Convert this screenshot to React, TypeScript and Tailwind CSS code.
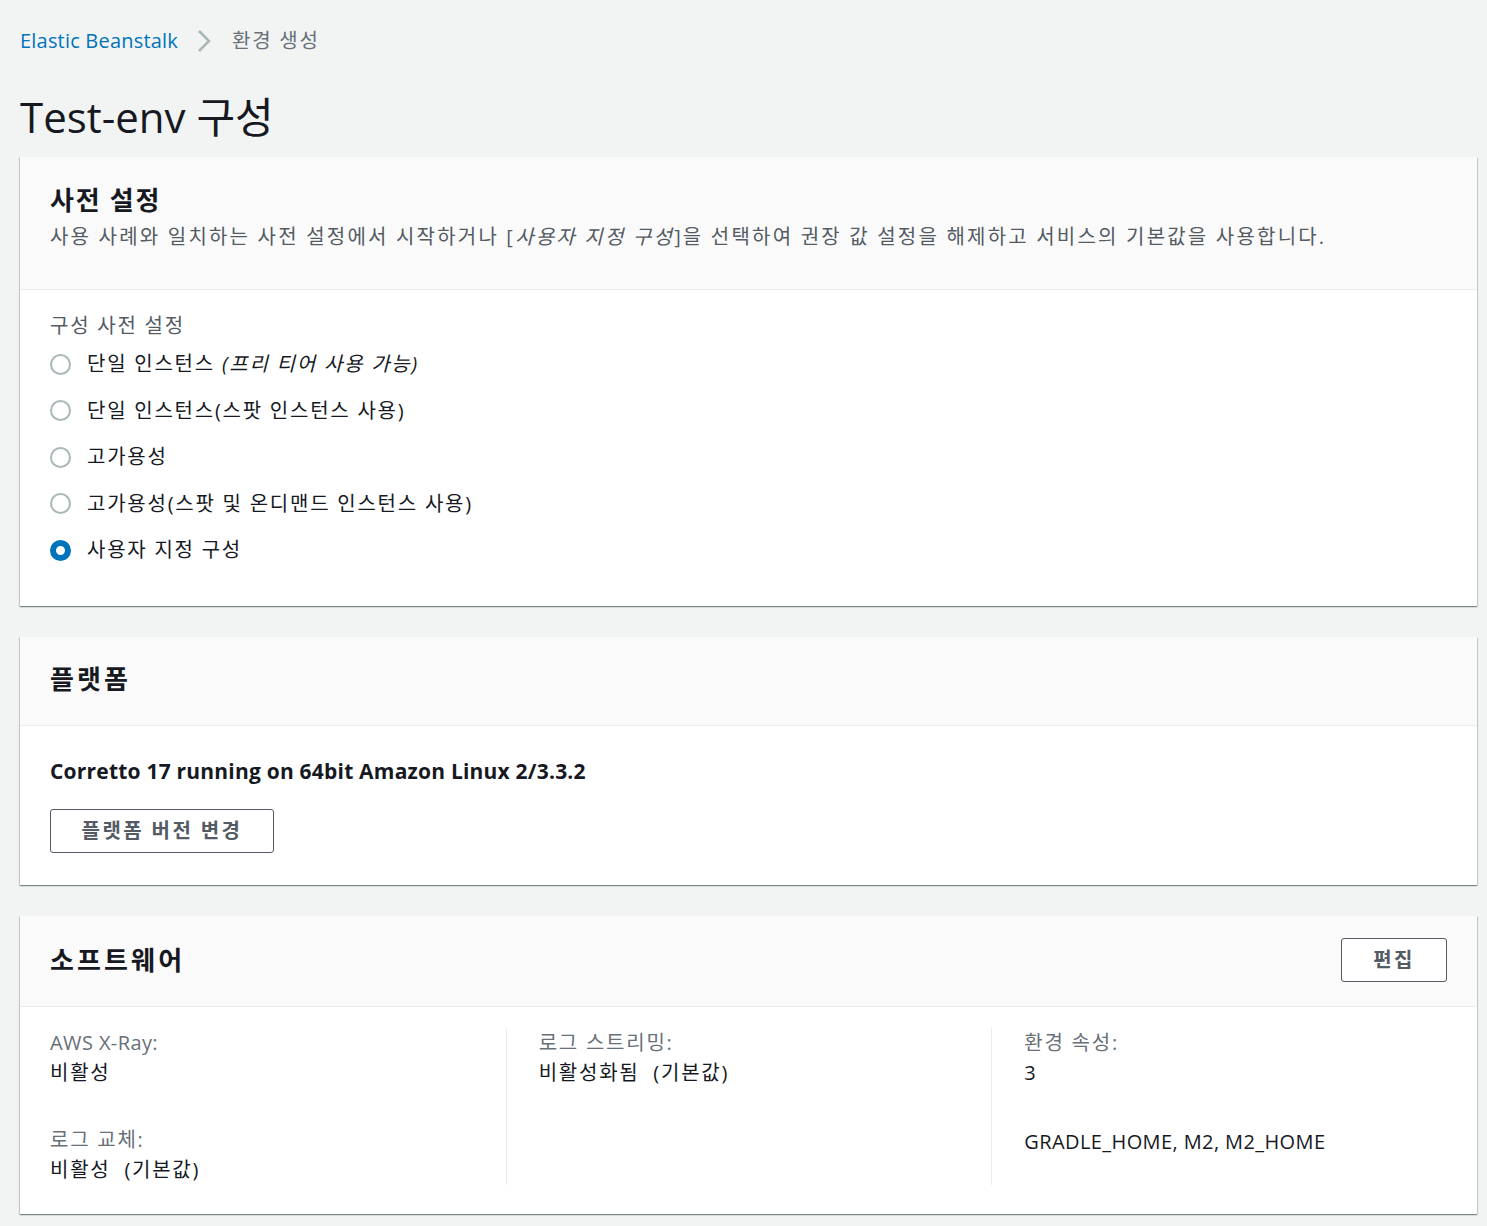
import React from "react";

const font = { fontFamily: '"Open Sans", "Noto Sans CJK KR", sans-serif' };

const presets = [
  { label: "단일 인스턴스 ", em: "(프리 티어 사용 가능)", checked: false },
  { label: "단일 인스턴스(스팟 인스턴스 사용)", checked: false },
  { label: "고가용성", checked: false },
  { label: "고가용성(스팟 및 온디맨드 인스턴스 사용)", checked: false },
  { label: "사용자 지정 구성", checked: true },
];

function Card({ children }: { children: React.ReactNode }) {
  return (
    <div className="bg-white shadow-[0_1px_1px_0_rgba(0,28,36,0.3),1px_1px_1px_0_rgba(0,28,36,0.15),-1px_1px_1px_0_rgba(0,28,36,0.15)]">
      {children}
    </div>
  );
}

function Radio({ checked }: { checked: boolean }) {
  return checked ? (
    <span className="w-[21px] h-[21px] rounded-full border-[6px] border-[#0073bb] bg-white shrink-0" />
  ) : (
    <span className="w-[21px] h-[21px] rounded-full border-2 border-[#aab7b8] bg-white shrink-0" />
  );
}

export default function App() {
  return (
    <div style={font} className="min-h-screen bg-[#f2f3f3] text-[#16191f] pl-5 pr-[10px] pt-[26px] pb-3 tracking-[0.11em]">
      {/* breadcrumb */}
      <div className="flex items-center text-[20px] leading-[30px]">
        <span className="text-[#0073bb] tracking-[0.01em]">Elastic Beanstalk</span>
        <svg className="ml-[19px] mr-[20px]" width="15" height="24" viewBox="0 0 15 24" fill="none">
          <path d="M2 2l10 10-10 10" stroke="#aab7b8" strokeWidth="2.5" />
        </svg>
        <span className="text-[#687078]">환경 생성</span>
      </div>

      <h1 className="text-[42px] leading-[52px] mt-[35px] mb-[14px] font-normal tracking-normal">Test-env 구성</h1>

      <div className="flex flex-col gap-[31px]">
        {/* 사전 설정 */}
        <Card>
          <div className="bg-[#fafafa] border-b border-[#eaeded] px-[30px] pt-[24px] pb-[37px]">
            <h2 className="text-[26px] leading-[38px] font-bold">사전 설정</h2>
            <p className="text-[20px] leading-[30px] text-[#545b64] mt-[3px] tracking-[0.11em]">
              사용 사례와 일치하는 사전 설정에서 시작하거나 [<i>사용자 지정 구성</i>]을 선택하여 권장 값 설정을 해제하고 서비스의 기본값을 사용합니다.
            </p>
          </div>
          <div className="px-[30px] pt-[21px] pb-[41px]">
            <div className="text-[20px] leading-[30px] text-[#545b64]">구성 사전 설정</div>
            <div className="flex flex-col gap-[16.5px] mt-[8px]">
              {presets.map((p) => (
                <label key={p.label} className="flex items-center gap-4 text-[20px] leading-[30px] text-[#16191f]">
                  <Radio checked={p.checked} />
                  <span>
                    {p.label}
                    {p.em && <i>{p.em}</i>}
                  </span>
                </label>
              ))}
            </div>
          </div>
        </Card>

        {/* 플랫폼 */}
        <Card>
          <div className="bg-[#fafafa] border-b border-[#eaeded] px-[30px] pt-[22px] pb-[26px]">
            <h2 className="text-[26px] leading-[40px] font-bold tracking-[0.12em]">플랫폼</h2>
          </div>
          <div className="px-[30px] pt-[30px] pb-[32px]">
            <div className="text-[21px] leading-[30px] font-bold tracking-[0.01em]">
              Corretto 17 running on 64bit Amazon Linux 2/3.3.2
            </div>
            <button className="mt-[23px] h-[44px] w-[224px] rounded-[3px] border border-[#545b64] bg-white text-[20px] font-bold text-[#545b64] tracking-[0.12em]">
              플랫폼 버전 변경
            </button>
          </div>
        </Card>

        {/* 소프트웨어 */}
        <Card>
          <div className="bg-[#fafafa] border-b border-[#eaeded] px-[30px] pt-[22px] pb-[24px] flex items-center justify-between">
            <h2 className="text-[26px] leading-[40px] font-bold tracking-[0.12em]">소프트웨어</h2>
            <button className="h-[44px] w-[106px] rounded-[3px] border border-[#545b64] bg-white text-[20px] font-bold text-[#545b64] tracking-[0.12em]">
              편집
            </button>
          </div>
          <div className="grid grid-cols-3 pt-[21px] pb-[29px] text-[20px] leading-[30px]">
            <div className="pl-[30px] pr-4">
              <div className="text-[#687078] tracking-[0.02em]">AWS X-Ray:</div>
              <div>비활성</div>
              <div className="text-[#687078] mt-[37px]">로그 교체:</div>
              <div>비활성 &nbsp;(기본값)</div>
            </div>
            <div className="border-l border-[#eaeded] pl-[32px] pr-4">
              <div className="text-[#687078]">로그 스트리밍:</div>
              <div>비활성화됨 &nbsp;(기본값)</div>
            </div>
            <div className="border-l border-[#eaeded] pl-[32px] pr-4">
              <div className="text-[#687078]">환경 속성:</div>
              <div>3</div>
              <div className="mt-[39px] tracking-[0.02em]">GRADLE_HOME, M2, M2_HOME</div>
            </div>
          </div>
        </Card>
      </div>
    </div>
  );
}
